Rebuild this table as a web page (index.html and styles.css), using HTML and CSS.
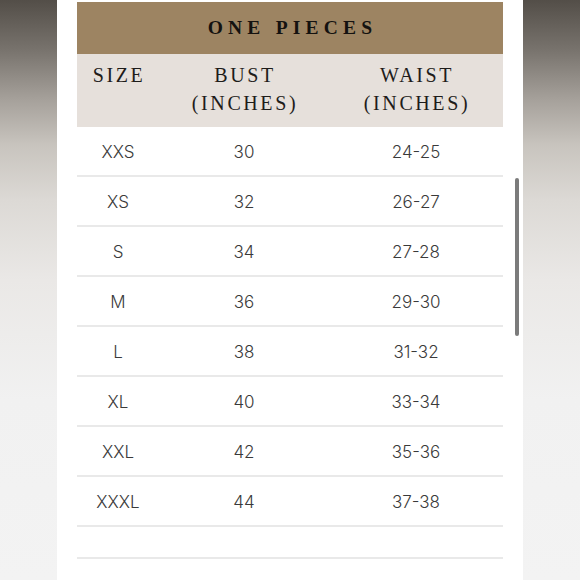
FILE: index.html
```html
<!DOCTYPE html>
<html>
<head>
<meta charset="utf-8">
<link rel="stylesheet" href="styles.css">
</head>
<body>
<div class="page">
  <div class="side side-left"></div>
  <div class="panel">
    <div class="chart">
      <div class="title">ONE PIECES</div>
      <div class="head">
        <div class="hcell">SIZE</div>
        <div class="hcell">BUST<br>(INCHES)</div>
        <div class="hcell">WAIST<br>(INCHES)</div>
      </div>
      <div class="row"><div>XXS</div><div>30</div><div>24-25</div></div>
      <div class="row"><div>XS</div><div>32</div><div>26-27</div></div>
      <div class="row"><div>S</div><div>34</div><div>27-28</div></div>
      <div class="row"><div>M</div><div>36</div><div>29-30</div></div>
      <div class="row"><div>L</div><div>38</div><div>31-32</div></div>
      <div class="row"><div>XL</div><div>40</div><div>33-34</div></div>
      <div class="row"><div>XXL</div><div>42</div><div>35-36</div></div>
      <div class="row"><div>XXXL</div><div>44</div><div>37-38</div></div>
      <div class="row row-empty"><div></div><div></div><div></div></div>
    </div>
    <div class="scrollbar"></div>
  </div>
  <div class="side side-right"></div>
</div>
</body>
</html>
```

FILE: styles.css
```css
html, body {
  margin: 0;
  padding: 0;
  background: #fff;
}
.page {
  display: flex;
  width: 580px;
  height: 580px;
  overflow: hidden;
}
.side {
  width: 57px;
  flex: none;
  background: linear-gradient(to bottom, #534e48 0px, #78736d 50px, #a6a19b 100px, #c8c4be 145px, #dcd9d5 200px, #eae8e6 280px, #f1f1f1 400px, #f3f3f3 580px);
}
.panel {
  position: relative;
  flex: 1;
  background: #fff;
  padding: 2px 20px 0 20px;
}
.chart {
  width: 426px;
}
.title {
  height: 52px;
  background: #9d8462;
  color: #141210;
  font-family: "Liberation Serif", "DejaVu Serif", serif;
  font-weight: bold;
  font-size: 19.5px;
  letter-spacing: 5.2px;
  display: flex;
  align-items: center;
  justify-content: center;
  padding-left: 5px;
}
.head {
  display: grid;
  grid-template-columns: 82px 170px 174px;
  background: #e6e0db;
  height: 73px;
  box-sizing: border-box;
  padding-top: 7px;
  font-family: "Liberation Serif", "DejaVu Serif", serif;
  font-size: 20px;
  line-height: 28px;
  letter-spacing: 2.6px;
  color: #1e1c1a;
}
.hcell {
  text-align: center;
  padding-left: 2px;
}
.row {
  display: grid;
  grid-template-columns: 82px 170px 174px;
  height: 50px;
  box-sizing: border-box;
  border-bottom: 2px solid #e9e9e9;
  align-items: center;
  text-align: center;
  font-family: "Inter", "Open Sans", sans-serif;
  font-size: 17px;
  font-weight: 300;
  color: #3a3a3a;
  padding-top: 1px;
}
.row-empty {
  height: 32px;
}
.scrollbar {
  position: absolute;
  right: 4px;
  top: 178px;
  width: 4px;
  height: 158px;
  border-radius: 2px;
  background: #7b7b7b;
}
```
